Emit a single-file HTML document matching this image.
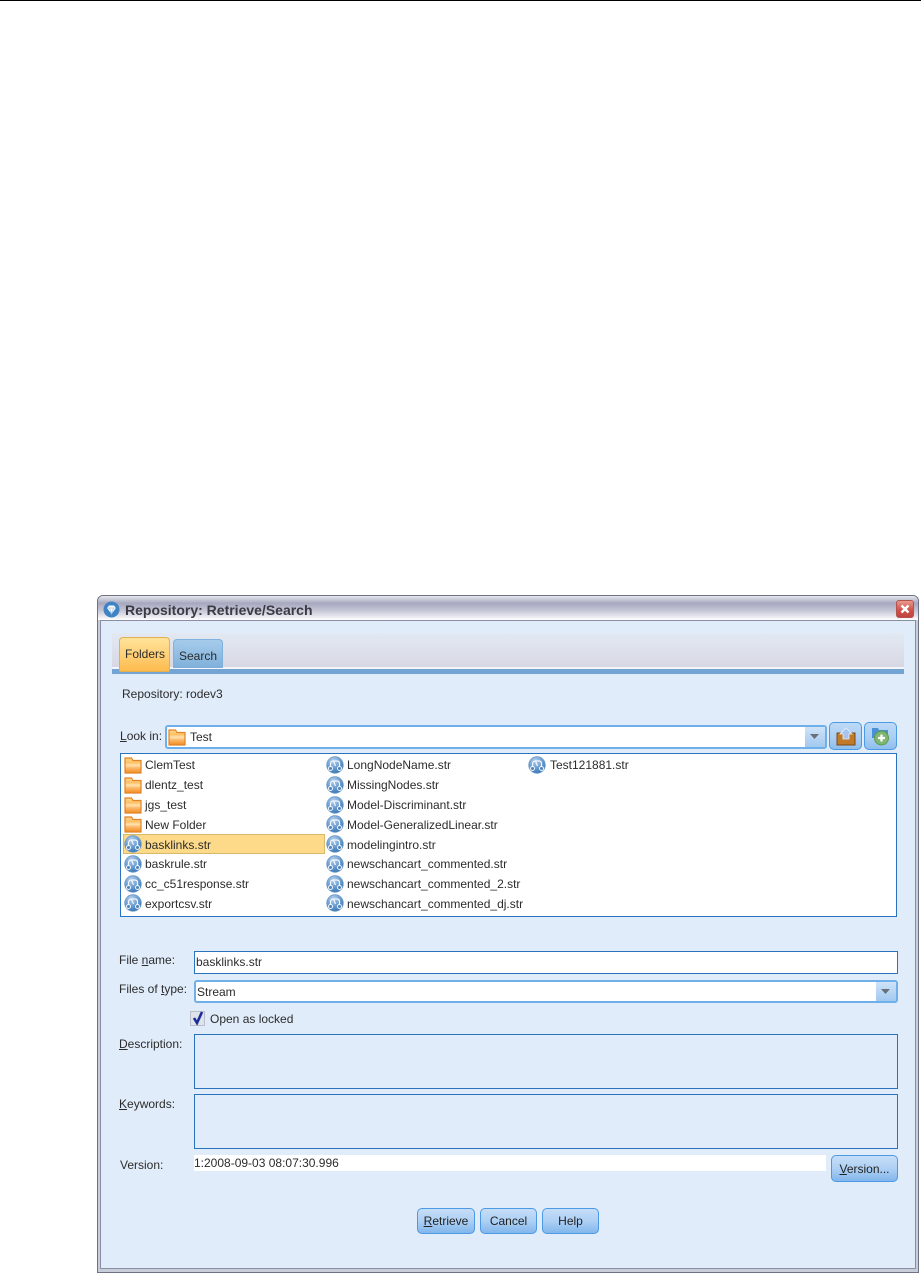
<!DOCTYPE html>
<html><head><meta charset="utf-8">
<style>
html,body{margin:0;padding:0;background:#fff}
body{width:921px;height:1273px;position:relative;overflow:hidden;font-family:"Liberation Sans",sans-serif;font-size:12px;color:#2c2c2c}
#w{position:absolute;left:0;top:0;width:921px;height:1273px;filter:blur(.35px)}
.a{position:absolute;box-sizing:border-box}
.t{position:absolute;white-space:nowrap;line-height:14px}
.btn{position:absolute;box-sizing:border-box;border:1px solid #4c9ae6;border-radius:5px;background:linear-gradient(#c6def8,#aed0f4 50%,#82b6ec);text-align:center;color:#222}
u{text-underline-offset:1px}
svg{position:absolute;display:block}
</style></head><body>
<svg width="0" height="0" style="position:absolute">
<defs>
<linearGradient id="fg" x1="0" y1="0" x2="0" y2="1"><stop offset="0" stop-color="#ffd68a"/><stop offset=".3" stop-color="#ffc063"/><stop offset=".5" stop-color="#ffe3b0"/><stop offset=".62" stop-color="#fcc075"/><stop offset="1" stop-color="#f48a1e"/></linearGradient>
<radialGradient id="sg" cx=".4" cy=".25" r=".85"><stop offset="0" stop-color="#b4d0ec"/><stop offset=".6" stop-color="#5f94cc"/><stop offset="1" stop-color="#2f6ca8"/></radialGradient>
<symbol id="folder" viewBox="0 0 18 18">
<path d="M1 17V2h6.500L9 4.500h8V17z" fill="url(#fg)" stroke="#e0842a" stroke-width="1.200"/>
</symbol>
<symbol id="stream" viewBox="0 0 18 18">
<circle cx="9" cy="9" r="8.300" fill="url(#sg)" stroke="#6f9cc9" stroke-width=".8"/>
<path d="M4.500 11V8Q4.500 5 7.500 5H11Q13.500 5 13.500 8V11M7.500 5 9.500 10" fill="none" stroke="#f2f7fd" stroke-width="1.200"/>
<circle cx="4.500" cy="12.500" r="2" fill="#4a82ba" stroke="#f2f7fd"/>
<circle cx="13.500" cy="12.500" r="2" fill="#4a82ba" stroke="#f2f7fd"/>
</symbol>
</defs>
</svg>

<div class="a" style="left:0;top:0;width:921px;height:1px;background:#000"></div>

<div id="w">
<!-- window -->
<div class="a" style="left:97px;top:595px;width:822px;height:678px;background:#c7cdd9;border:1px solid #6f7282;border-radius:6px 6px 0 0"></div>
<div class="a" style="left:98px;top:596px;width:820px;height:24px;border-radius:5px 5px 0 0;background:linear-gradient(#e6e7ee,#a6a8bf 30%,#c4c5d4 60%,#f2f2f6 92%,#fff)"></div>
<svg style="left:103px;top:601px" width="17" height="17" viewBox="0 0 17 17"><circle cx="8.500" cy="8.500" r="8" fill="#3f83c4"/><path d="M4 7 6 4.500h5L13 7 8.500 13z" fill="#fff"/><path d="M4 7h9M6.500 7 8.500 13 10.500 7" stroke="#9cc3e6" stroke-width=".7" fill="none"/></svg>
<div class="t" style="left:125px;top:603px;font-size:14px;font-weight:bold;color:#3a3a44">Repository: Retrieve/Search</div>
<div class="a" style="left:896px;top:600px;width:18px;height:18px;border:1px solid #b5524f;border-radius:3px;background:linear-gradient(#e79a8c,#d0534c 55%,#c0443e)"></div>
<svg style="left:899px;top:603px" width="12" height="12" viewBox="0 0 12 12"><path d="M2.500 2.500l7 7M9.500 2.500l-7 7" stroke="#fff" stroke-width="2.400"/></svg>

<!-- body -->
<div class="a" style="left:100px;top:620px;width:816px;height:649px;background:#e0ecfa;border:1px solid #8a8fa3"></div>

<!-- tab band -->
<div class="a" style="left:112px;top:633px;width:792px;height:34px;background:linear-gradient(#e2e9f3,#dcdfea 60%,#d7d7e4)"></div>
<div class="a" style="left:112px;top:667px;width:792px;height:2px;background:#f2f5fa"></div>
<div class="a" style="left:112px;top:669px;width:792px;height:5px;background:#74a4d4"></div>
<div class="a" style="left:173px;top:639px;width:50px;height:29px;border:1px solid #7fb2e0;border-bottom:0;border-radius:4px 4px 0 0;background:linear-gradient(#a6cbeb,#7fb0da)"></div>
<div class="t" style="left:179px;top:649px">Search</div>
<div class="a" style="left:119px;top:637px;width:51px;height:35px;border:1px solid #e2b04f;border-radius:4px 4px 2px 2px;background:linear-gradient(#ffe39a,#ffd077 50%,#fdbb4e)"></div>
<div class="t" style="left:125px;top:647px">Folders</div>

<div class="t" style="left:122px;top:687px">Repository: rodev3</div>

<!-- look in -->
<div class="t" style="left:120px;top:729px"><u>L</u>ook in:</div>
<div class="a" style="left:165px;top:725px;width:662px;height:24px;background:#fff;border:2px solid #6fb0ea;border-radius:3px"></div>
<svg style="left:168px;top:728px" width="18" height="18"><use href="#folder"/></svg>
<div class="t" style="left:190px;top:730px">Test</div>
<div class="a" style="left:805px;top:727px;width:20px;height:20px;background:linear-gradient(#cfe3f8,#a2c9ef)"></div>
<svg style="left:810px;top:734px" width="10" height="6"><path d="M0 0h9L4.500 5z" fill="#6a6f78"/></svg>
<div class="btn" style="left:829px;top:722px;width:33px;height:28px;border-color:#4c9ae6;background:linear-gradient(#bddaf7,#a8cdf3 60%,#8fbeee)"></div>
<svg style="left:836px;top:727px" width="20" height="19" viewBox="0 0 20 19"><path d="M1 6h6v2h6V6h6v12H1z" fill="#c07a2a" stroke="#7a4a14"/><path d="M10 1l6 6h-3v5H7V7H4z" fill="#a9c4ea" stroke="#e8f0fb" stroke-width=".8"/></svg>
<div class="btn" style="left:864px;top:722px;width:33px;height:28px;border-color:#4c9ae6;background:linear-gradient(#bddaf7,#a8cdf3 60%,#8fbeee)"></div>
<svg style="left:871px;top:727px" width="21" height="19" viewBox="0 0 21 19"><path d="M1 1h6l1 2h9v8H1z" fill="#4a90d8"/><circle cx="10.500" cy="11" r="7" fill="#7fb770" stroke="#5d9a50"/><path d="M10.500 7.500v7M7 11h7" stroke="#fff" stroke-width="2.200"/></svg>

<!-- list -->
<div class="a" style="left:120px;top:753px;width:777px;height:164px;background:#fff;border:1px solid #2a74bf"></div>
<div class="a" style="left:123px;top:834px;width:202px;height:20px;background:#fdd98a;border:1px solid #d8b96a"></div>

<svg style="left:124px;top:756px" width="18" height="18"><use href="#folder"/></svg><div class="t" style="left:145px;top:758px">ClemTest</div>
<svg style="left:124px;top:776px" width="18" height="18"><use href="#folder"/></svg><div class="t" style="left:145px;top:778px">dlentz_test</div>
<svg style="left:124px;top:796px" width="18" height="18"><use href="#folder"/></svg><div class="t" style="left:145px;top:798px">jgs_test</div>
<svg style="left:124px;top:815px" width="18" height="18"><use href="#folder"/></svg><div class="t" style="left:145px;top:818px">New Folder</div>
<svg style="left:124px;top:835px" width="18" height="18"><use href="#stream"/></svg><div class="t" style="left:145px;top:838px">basklinks.str</div>
<svg style="left:124px;top:855px" width="18" height="18"><use href="#stream"/></svg><div class="t" style="left:145px;top:857px">baskrule.str</div>
<svg style="left:124px;top:875px" width="18" height="18"><use href="#stream"/></svg><div class="t" style="left:145px;top:877px">cc_c51response.str</div>
<svg style="left:124px;top:894px" width="18" height="18"><use href="#stream"/></svg><div class="t" style="left:145px;top:897px">exportcsv.str</div>

<svg style="left:326px;top:756px" width="18" height="18"><use href="#stream"/></svg><div class="t" style="left:347px;top:758px">LongNodeName.str</div>
<svg style="left:326px;top:776px" width="18" height="18"><use href="#stream"/></svg><div class="t" style="left:347px;top:778px">MissingNodes.str</div>
<svg style="left:326px;top:796px" width="18" height="18"><use href="#stream"/></svg><div class="t" style="left:347px;top:798px">Model-Discriminant.str</div>
<svg style="left:326px;top:815px" width="18" height="18"><use href="#stream"/></svg><div class="t" style="left:347px;top:818px">Model-GeneralizedLinear.str</div>
<svg style="left:326px;top:835px" width="18" height="18"><use href="#stream"/></svg><div class="t" style="left:347px;top:838px">modelingintro.str</div>
<svg style="left:326px;top:855px" width="18" height="18"><use href="#stream"/></svg><div class="t" style="left:347px;top:857px">newschancart_commented.str</div>
<svg style="left:326px;top:875px" width="18" height="18"><use href="#stream"/></svg><div class="t" style="left:347px;top:877px">newschancart_commented_2.str</div>
<svg style="left:326px;top:894px" width="18" height="18"><use href="#stream"/></svg><div class="t" style="left:347px;top:897px">newschancart_commented_dj.str</div>

<svg style="left:528px;top:756px" width="18" height="18"><use href="#stream"/></svg><div class="t" style="left:550px;top:758px">Test121881.str</div>

<!-- form -->
<div class="t" style="left:119px;top:953px">File <u>n</u>ame:</div>
<div class="a" style="left:194px;top:951px;width:704px;height:23px;background:#fff;border:1px solid #2a74bf"></div>
<div class="t" style="left:196px;top:955px">basklinks.str</div>

<div class="t" style="left:119px;top:982px">Files of <u>t</u>ype:</div>
<div class="a" style="left:194px;top:980px;width:704px;height:23px;background:#fff;border:2px solid #6fb0ea;border-radius:3px"></div>
<div class="t" style="left:197px;top:985px">Stream</div>
<div class="a" style="left:876px;top:982px;width:20px;height:19px;background:linear-gradient(#cfe3f8,#a2c9ef)"></div>
<svg style="left:881px;top:989px" width="10" height="6"><path d="M0 0h9L4.500 5z" fill="#6a6f78"/></svg>

<div class="a" style="left:190px;top:1011px;width:15px;height:15px;background:#dfe3ea;border:1px solid #b9bec9"></div>
<svg style="left:191px;top:1010px" width="14" height="16" viewBox="0 0 14 16"><path d="M3 8l3 5 5-11" fill="none" stroke="#1c2f9a" stroke-width="2.600"/></svg>
<div class="t" style="left:210px;top:1012px">Open as locked</div>

<div class="t" style="left:119px;top:1037px"><u>D</u>escription:</div>
<div class="a" style="left:194px;top:1034px;width:704px;height:55px;border:1px solid #2a74bf"></div>

<div class="t" style="left:119px;top:1097px"><u>K</u>eywords:</div>
<div class="a" style="left:194px;top:1094px;width:704px;height:55px;border:1px solid #2a74bf"></div>

<div class="t" style="left:120px;top:1158px">Version:</div>
<div class="a" style="left:194px;top:1155px;width:632px;height:16px;background:#fff"></div>
<div class="t" style="left:194px;top:1156px">1:2008-09-03 08:07:30.996</div>
<div class="btn" style="left:831px;top:1155px;width:67px;height:27px;line-height:26px"><u>V</u>ersion...</div>

<div class="btn" style="left:417px;top:1208px;width:58px;height:26px;line-height:25px"><u>R</u>etrieve</div>
<div class="btn" style="left:480px;top:1208px;width:57px;height:26px;line-height:25px">Cancel</div>
<div class="btn" style="left:542px;top:1208px;width:57px;height:26px;line-height:25px">Help</div>
</div>
</body></html>
